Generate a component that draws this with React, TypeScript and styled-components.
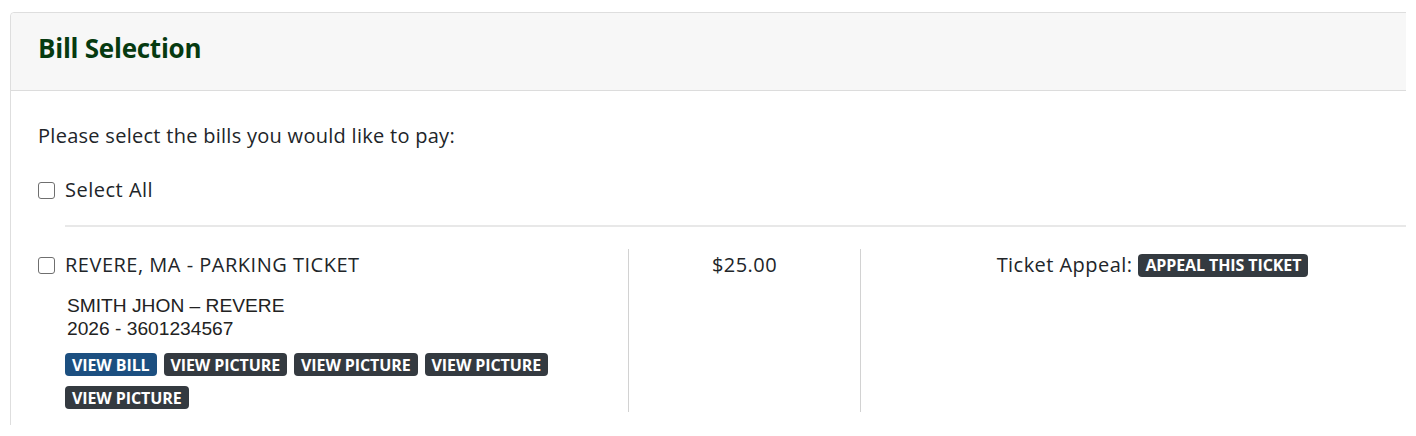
import React from "react";
import styled, { createGlobalStyle } from "styled-components";

const GlobalStyle = createGlobalStyle`
  html, body { margin: 0; padding: 0; background: #ffffff; }
  * { box-sizing: border-box; }
`;

const UI_FONT = `"Open Sans", "Noto Sans", sans-serif`;

const Viewport = styled.div`
  width: 1406px;
  height: 425px;
  overflow: hidden;
  padding: 12px 0 0 10px;
  font-family: ${UI_FONT};
  color: #212529;
`;

const Card = styled.section`
  width: 1500px;
  border: 1px solid #dedede;
  border-radius: 4px;
  background: #ffffff;
`;

const CardHeader = styled.header`
  height: 78px;
  display: flex;
  align-items: center;
  padding: 0 27px 7px;
  background: #f7f7f7;
  border-bottom: 1.5px solid #dcdcdc;
  border-radius: 4px 4px 0 0;
`;

const Title = styled.h2`
  margin: 0;
  font-family: ${UI_FONT};
  font-weight: 700;
  font-size: 26px;
  letter-spacing: -0.25px;
  color: #063a10;
`;

const CardBody = styled.div`
  padding: 30px 0 40px 27px;
`;

const Prompt = styled.p`
  margin: 0;
  font-size: 20px;
  line-height: 30px;
  letter-spacing: 0.28px;
`;

const CheckLine = styled.label<{ $top?: number }>`
  display: flex;
  align-items: center;
  gap: 10px;
  font-size: 20px;
  line-height: 30px;
  letter-spacing: 0.5px;
  margin-top: ${(p) => p.$top ?? 0}px;
`;

const Box = styled.input.attrs({ type: "checkbox" })`
  appearance: none;
  -webkit-appearance: none;
  width: 17px;
  height: 17px;
  margin: 0;
  border: 1.3px solid #6f6f6f;
  border-radius: 3px;
  background: #fff;
  flex: none;
`;

const Rule = styled.hr`
  margin: 20px 0 0 27px;
  border: 0;
  border-top: 2px solid #e8e8e8;
`;

const BillRow = styled.div`
  display: grid;
  grid-template-columns: 590px 232px 584px;
  margin-top: 22px;
  height: 163px;
`;

const Cell = styled.div<{ $divider?: boolean; $center?: boolean }>`
  padding-top: 1px;
  border-left: ${(p) => (p.$divider ? "1px solid #d2d2d2" : "none")};
  text-align: ${(p) => (p.$center ? "center" : "left")};
  font-size: 20px;
  line-height: 30px;
  letter-spacing: 0.45px;
`;

const Details = styled.div`
  margin: 14px 0 0 29px;
  font-family: "Liberation Sans", Arial, sans-serif;
  font-size: 19.2px;
  line-height: 23px;
  letter-spacing: 0;
  color: #222222;
`;

const BadgeWrap = styled.div`
  display: flex;
  flex-wrap: wrap;
  gap: 10px 7px;
  margin: 13px 0 0 27px;
  width: 500px;
`;

const Badge = styled.span<{ $tone?: "blue" | "dark" }>`
  display: inline-flex;
  align-items: center;
  height: 23px;
  padding: 0 7px;
  border-radius: 4px;
  background: ${(p) => (p.$tone === "blue" ? "#1c4f80" : "#343a40")};
  color: #ffffff;
  font-family: ${UI_FONT};
  font-weight: 700;
  font-size: 16px;
  letter-spacing: -0.1px;
  line-height: 1;
  white-space: nowrap;
`;

const AppealLine = styled.div`
  display: inline-flex;
  align-items: center;
  gap: 6px;
`;

export default function App() {
  return (
    <>
      <GlobalStyle />
      <Viewport>
        <Card>
          <CardHeader>
            <Title>Bill Selection</Title>
          </CardHeader>
          <CardBody>
            <Prompt>Please select the bills you would like to pay:</Prompt>
            <CheckLine $top={24}>
              <Box />
              Select All
            </CheckLine>
            <Rule />
            <BillRow>
              <Cell>
                <CheckLine>
                  <Box />
                  REVERE, MA - PARKING TICKET
                </CheckLine>
                <Details>
                  SMITH JHON – REVERE
                  <br />
                  2026 - 3601234567
                </Details>
                <BadgeWrap>
                  <Badge $tone="blue">VIEW BILL</Badge>
                  <Badge>VIEW PICTURE</Badge>
                  <Badge>VIEW PICTURE</Badge>
                  <Badge>VIEW PICTURE</Badge>
                  <Badge>VIEW PICTURE</Badge>
                </BadgeWrap>
              </Cell>
              <Cell $divider $center>
                $25.00
              </Cell>
              <Cell $divider $center>
                <AppealLine>
                  Ticket Appeal:
                  <Badge>APPEAL THIS TICKET</Badge>
                </AppealLine>
              </Cell>
            </BillRow>
          </CardBody>
        </Card>
      </Viewport>
    </>
  );
}
